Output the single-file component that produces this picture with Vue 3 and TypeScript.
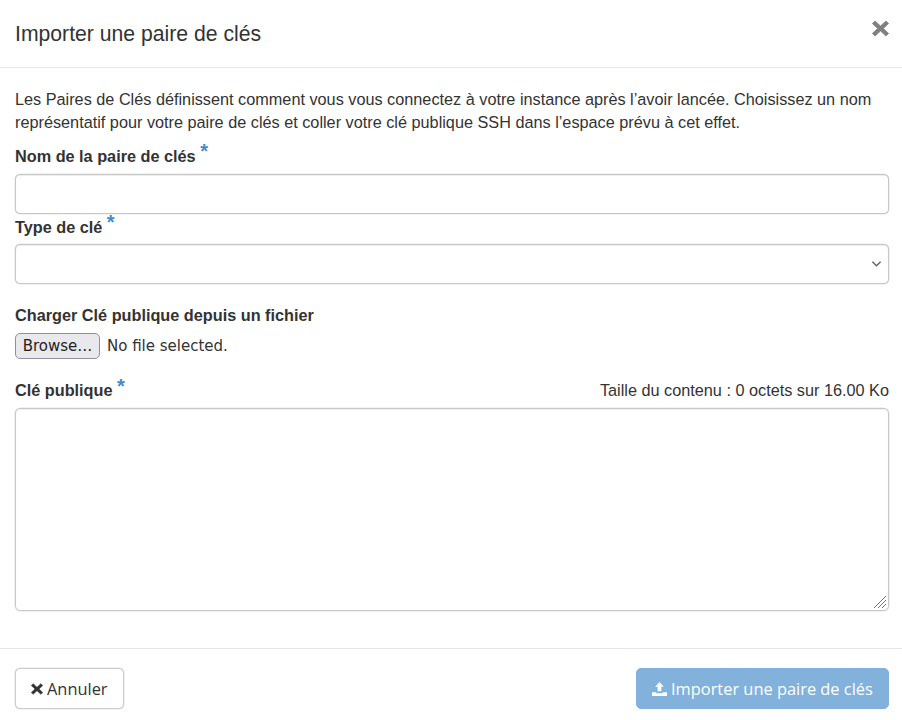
<script setup lang="ts">
const title = 'Importer une paire de clés'
</script>

<template>
  <div class="modal">
    <header class="head">
      <h4>{{ title }}</h4>
      <svg class="close" viewBox="0 0 18 18" aria-hidden="true">
        <path d="M3.2 1 9 6.4 14.8 1 17.6 3.8 12 9l5.6 5.2-2.8 2.8L9 11.6 3.2 17 .4 14.2 6 9 .4 3.8z" stroke="#808080" stroke-width="0.8" stroke-linejoin="round" fill="#808080" />
      </svg>
    </header>
    <main class="body">
      <p class="intro">Les Paires de Clés définissent comment vous vous connectez à votre instance après l’avoir lancée. Choisissez un nom représentatif pour votre paire de clés et coller votre clé publique SSH dans l’espace prévu à cet effet.</p>
      <label class="lab first">Nom de la paire de clés <span class="req">*</span></label>
      <div class="ctl name"></div>
      <label class="lab second">Type de clé <span class="req">*</span></label>
      <div class="ctl sel">
        <svg class="chev" viewBox="0 0 12 8" aria-hidden="true"><path d="M1.5 1.5 6 6l4.5-4.5" fill="none" stroke="#666" stroke-width="1.6" /></svg>
      </div>
      <label class="lab third">Charger Clé publique depuis un fichier</label>
      <div class="file">
        <span class="browse">Browse…</span>
        <span class="none">No file selected.</span>
      </div>
      <div class="keyrow">
        <label class="lab">Clé publique <span class="req">*</span></label>
        <span class="size">Taille du contenu : 0 octets sur 16.00 Ko</span>
      </div>
      <div class="area">
        <svg class="grip" viewBox="0 0 14 14" aria-hidden="true">
          <path d="M13 1 1 13M13 5 5 13M13 9 9 13" stroke="#777" stroke-width="1" fill="none" />
        </svg>
      </div>
    </main>
    <footer class="foot">
      <button class="btn cancel" type="button">
        <svg class="ico x" viewBox="0 0 18 18" aria-hidden="true"><path d="M3.2 1 9 6.4 14.8 1 17.6 3.8 12 9l5.6 5.2-2.8 2.8L9 11.6 3.2 17 .4 14.2 6 9 .4 3.8z" fill="#333" stroke="#333" stroke-width="0.8" stroke-linejoin="round" /></svg>
        Annuler
      </button>
      <button class="btn submit" type="button">
        <svg class="ico up" viewBox="0 0 16 15" aria-hidden="true"><path d="M8 0 12.6 5H10v5H6V5H3.4zM0 11h4.5v1h7v-1H16v4H0z" fill="#fff" /></svg>
        Importer une paire de clés
      </button>
    </footer>
  </div>
</template>

<style scoped>
.modal {
  width: 902px;
  height: 720px;
  background: #fff;
  color: #333;
  font-family: "Liberation Sans", Arial, sans-serif;
  font-size: 16.25px;
  line-height: 23px;
  display: flex;
  flex-direction: column;
  box-sizing: border-box;
}
.head {
  height: 68px;
  box-sizing: border-box;
  border-bottom: 1px solid #e5e5e5;
  padding: 0 15px;
  display: flex;
  align-items: flex-start;
  justify-content: space-between;
}
h4 {
  margin: 22px 0 0;
  font-size: 21.2px;
  font-weight: 400;
  line-height: 24px;
}
.close { width: 17px; height: 17px; margin: 20px -2px 0 0; }
.body {
  flex: 1;
  padding: 20px 13px 0 15px;
  display: flex;
  flex-direction: column;
}
.intro { margin: 0; }
.lab { font-weight: 700; display: block; line-height: 23px; }
.first { margin-top: 11px; }
.second { margin-top: 2px; }
.third { margin-top: 20px; }
.req {
  color: #428bca;
  font-size: 20px;
  position: relative;
  top: -4px;
  line-height: 0;
}
.ctl {
  height: 40px;
  margin-top: 5px;
  box-sizing: border-box;
  border: 1px solid #c8c8c8;
  border-radius: 5px;
  box-shadow: 0 0 0 0.3px #ccc, inset 0 1px 1px rgba(0, 0, 0, 0.075);
  background: #fff;
}
.name { margin-top: 6px; }
.sel { display: flex; align-items: center; justify-content: flex-end; padding-right: 6px; }
.chev { width: 11px; height: 8px; }
.file {
  display: flex;
  align-items: center;
  gap: 7px;
  margin-top: 6px;
  font-family: "DejaVu Sans", sans-serif;
  font-size: 15px;
}
.browse {
  width: 85px;
  height: 26px;
  box-sizing: border-box;
  border: 1px solid #8f8f9d;
  border-radius: 5px;
  background: #e9e9ed;
  color: #222;
  text-align: center;
  line-height: 24px;
}
.none { color: #333; }
.keyrow {
  display: flex;
  justify-content: space-between;
  margin-top: 20px;
}
.keyrow .req { top: -3px; }
.area {
  flex: 0 0 203px;
  margin-top: 6px;
  box-sizing: border-box;
  border: 1px solid #c8c8c8;
  border-radius: 5px;
  box-shadow: 0 0 0 0.3px #ccc, inset 0 1px 1px rgba(0, 0, 0, 0.075);
  position: relative;
}
.grip { position: absolute; right: 1px; bottom: 1px; width: 14px; height: 14px; }
.foot {
  height: 72px;
  box-sizing: border-box;
  border-top: 1px solid #e5e5e5;
  padding: 19px 13px 0 15px;
  display: flex;
  justify-content: space-between;
  align-items: flex-start;
}
.btn {
  height: 41px;
  box-sizing: border-box;
  border-radius: 5px;
  font-family: "Open Sans", sans-serif;
  font-size: 16.4px;
  padding: 0 15px;
  display: inline-flex;
  align-items: center;
  gap: 4px;
}
.cancel { border: 1px solid #ccc; background: #fff; color: #333; width: 109px; box-shadow: 0 0 0 0.3px #ccc; }
.submit { border: 1px solid #82b1db; background: #82b1db; color: #fff; width: 253px; }
.x { width: 12px; height: 12px; }
.up { width: 15px; height: 14px; }
</style>
